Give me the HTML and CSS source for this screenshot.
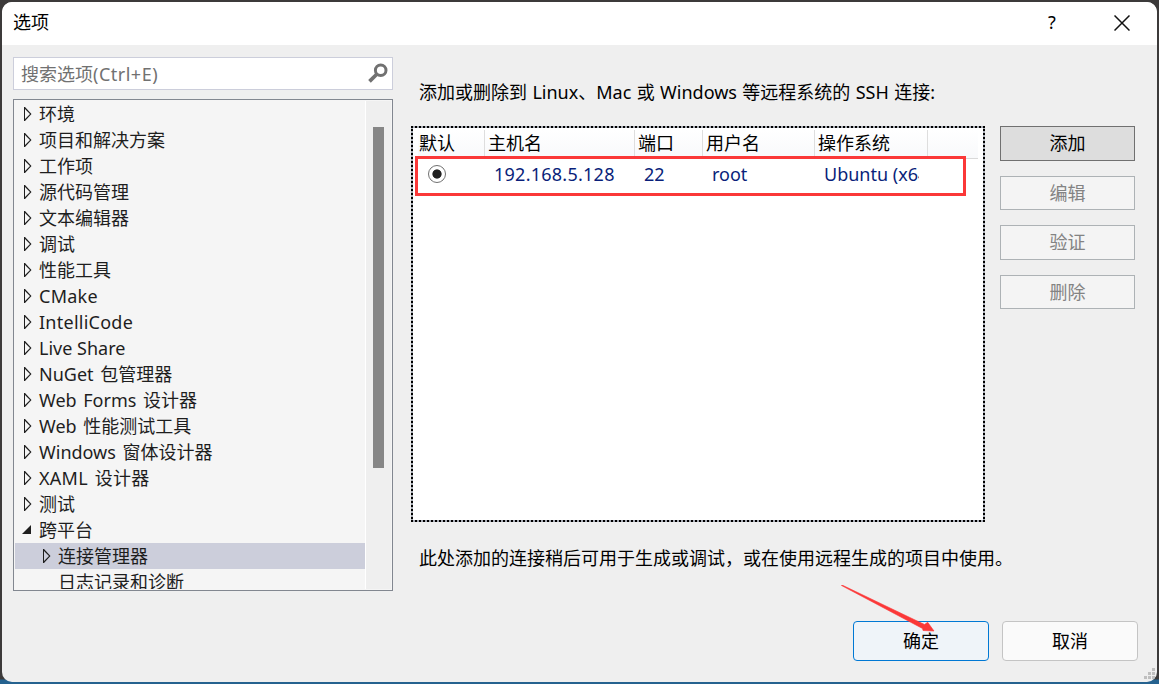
FILE: index.html
```html
<!DOCTYPE html>
<html lang="zh-CN">
<head>
    <meta charset="utf-8">
    <title>选项</title>
    <link rel="stylesheet" href="styles.css">
</head>
<body>
<div class="window">
<div class="titlebar">
    <h1>选项</h1>
    <span class="help">?</span>
    <svg class="close" width="16" height="16" viewBox="0 0 16 16"><path d="M.5 .5l15 15M15.5 .5l-15 15" stroke="#111" stroke-width="1.5" fill="none"/></svg>
</div>
<div class="main">
<div class="side">
    <div class="search">
        <span>搜索选项<span class="key">(Ctrl+E)</span></span>
        <svg width="20" height="20" viewBox="0 0 20 20" fill="none" stroke="#717171"><circle cx="12.7" cy="7.3" r="5.3" stroke-width="3"/><path d="M9 11L1.5 18.3" stroke-width="3.8"/></svg>
    </div>
    <div class="tree">
    <ul>
    <li><i></i>环境</li>
    <li><i></i>项目和解决方案</li>
    <li><i></i>工作项</li>
    <li><i></i>源代码管理</li>
    <li><i></i>文本编辑器</li>
    <li><i></i>调试</li>
    <li><i></i>性能工具</li>
    <li class="wide"><i></i>CMake</li>
    <li class="wide"><i></i>IntelliCode</li>
    <li><i></i>Live Share</li>
    <li class="spaced"><i></i>NuGet 包管理器</li>
    <li class="spaced"><i></i>Web Forms 设计器</li>
    <li class="spaced"><i></i>Web 性能测试工具</li>
    <li class="spaced"><i></i>Windows 窗体设计器</li>
    <li class="wide spaced"><i></i>XAML 设计器</li>
    <li><i></i>测试</li>
    <li class="open"><i></i>跨平台</li>
    <li class="child selected"><i></i>连接管理器</li>
    <li class="child leaf"><i></i>日志记录和诊断</li>
    </ul>
    <div class="scrollbar"><div class="thumb"></div></div>
    </div>
</div>
<div class="page">
    <p class="intro">添加或删除到 Linux、Mac 或 Windows 等远程系统的 SSH 连接:</p>
    <div class="connections">
        <div class="list">
            <div class="row head"><span>默认</span><span>主机名</span><span>端口</span><span>用户名</span><span>操作系统</span></div>
            <div class="row item"><span><b class="radio"></b></span><span class="host">192.168.5.128</span><span>22</span><span>root</span><span>Ubuntu (x64)</span></div>
            <div class="marker"></div>
        </div>
        <div class="actions">
            <button class="primary">添加</button>
            <button disabled>编辑</button>
            <button disabled>验证</button>
            <button disabled>删除</button>
        </div>
    </div>
    <p class="note">此处添加的连接稍后可用于生成或调试，或在使用远程生成的项目中使用。</p>
</div>
</div>
<div class="footer">
    <button class="ok">确定</button>
    <button>取消</button>
</div>
<svg class="arrow" width="96" height="50" viewBox="0 0 96 50"><path d="M.5 .5L1 0L83.500 39.500L86.700 37.300L93 46L82 45.500L81.500 43.500Z" fill="#fb3838" stroke="#fb3838" stroke-width=".6"/></svg>
<svg class="grip" width="11" height="11" viewBox="0 0 11 11"><path d="M8 0h3v3h-3zM4 4h3v3h-3zM8 4h3v3h-3zM0 8h3v3h-3zM4 8h3v3h-3zM8 8h3v3h-3z" fill="#bfbfbf"/></svg>
</div>
</body>
</html>
```

FILE: styles.css
```css
* { box-sizing: border-box; }
body { margin: 0; height: 684px; padding: 2px; overflow: hidden; background: linear-gradient(#3c3a3a 0 660px, #3c3a3a 679px, #25628f 680px); font: 18px/26px "Noto Sans", "Noto Sans CJK SC", sans-serif; color: #1e1e1e; }
p, h1, ul { margin: 0; padding: 0; font-size: 18px; font-weight: normal; }
button { font: inherit; padding: 0; color: #000; }

.window { position: relative; height: 680px; background: #efefef; border-radius: 10px; overflow: hidden; }
.titlebar { height: 43px; padding: 0 27px 0 11px; background: #fff; display: flex; align-items: center; color: #000; }
.titlebar h1 { flex: 1; padding-bottom: 3px; }
.help { width: 12px; margin-right: 56px; padding-bottom: 3px; text-align: center; }
.close { display: block; margin-bottom: 2px; }

.main { display: flex; padding: 12px 22px 0 11px; }
.side { width: 380px; margin-right: 18px; }
.search { height: 33px; padding: 0 4px 0 7px; border: 1px solid #cccedb; background: #fff; color: #717171; display: flex; align-items: center; justify-content: space-between; }
.search svg { margin-bottom: 2px; }
.key { letter-spacing: 0.5px; }
.tree { height: 492px; margin-top: 9px; padding: 1px; border: 1px solid #828790; background: #f5f5f5; display: flex; overflow: hidden; }
.tree ul { width: 350px; height: 488px; overflow: hidden; list-style: none; }
.tree li { height: 26px; padding-left: 9px; display: flex; align-items: center; white-space: pre; }
.tree i { width: 15px; height: 14px; background: #1e1e1e; clip-path: polygon(0 0, 0 100%, 1px 100%, 7.5px 7px, 1px 0, 1px 2px, 6px 7px, 1px 12px, 1px 0); }
.tree .open i { width: 17px; margin-left: -2px; clip-path: polygon(9px 2px, 9px 11px, 0 11px); }
.tree .child { padding-left: 28px; }
.tree .leaf i { visibility: hidden; }
.tree .selected { background: #cccedb; }
.tree .spaced { word-spacing: 2px; }
.tree .wide { letter-spacing: 0.25px; }
.scrollbar { width: 26px; border-left: 1px solid #fff; background: #efefef; padding: 26px 0 0 7px; }
.thumb { width: 11px; height: 341px; background: #868686; }

.page { flex: 1; }
.intro, .note { padding-left: 8px; color: #000; white-space: nowrap; }
.intro { padding-top: 22px; word-spacing: 0.7px; }
.note { padding-top: 23px; }
.connections { margin-top: 21px; display: flex; justify-content: space-between; }
.list { position: relative; width: 574px; height: 396px; padding: 2px 5px; border: 2px dotted #000; background: linear-gradient(#fff, #fff) padding-box, #a9adb6 border-box; }
.row { display: grid; grid-template-columns: 67px 150px 68px 112px 113px 1fr; white-space: nowrap; }
.head { height: 29px; line-height: 27px; color: #000; background: linear-gradient(#fff, #f8f9fb); border-bottom: 1px solid #d9d9d9; }
.head span { padding-left: 3px; border-right: 1px solid #dedede; }
.head span:first-child { padding-left: 1px; }
.item { height: 30px; align-items: center; color: #0a1f7a; }
.item span { padding-left: 9px; overflow: hidden; margin-right: 9px; }
.item span:first-child { padding-left: 10px; }
.item .host { letter-spacing: 0.25px; }
.radio { display: block; width: 18px; height: 18px; border: 1px solid #707070; border-radius: 50%; background: radial-gradient(circle, #212121 4.2px, #fff 5px); }
.marker { position: absolute; left: 2px; top: 28px; width: 551px; height: 40px; border: 3px solid #fb3838; }

.actions { width: 135px; display: flex; flex-direction: column; gap: 15px; }
.actions button { height: 34.5px; border: 1px solid #adb2b5; background: #f4f4f4; color: #838383; }
.actions .primary { border-color: #707070; background: #ddd; color: #000; }

.footer { display: flex; justify-content: flex-end; gap: 13px; padding: 30px 19px 0 0; }
.footer button { width: 136px; height: 40px; border: 1px solid #c4c4c4; border-radius: 4px; background: #fafafa; }
.footer .ok { border-color: #0078d4; background: #eff4f9; }
.arrow { position: absolute; left: 839px; top: 583px; }
.grip { position: absolute; right: 2px; bottom: 3px; }
```
